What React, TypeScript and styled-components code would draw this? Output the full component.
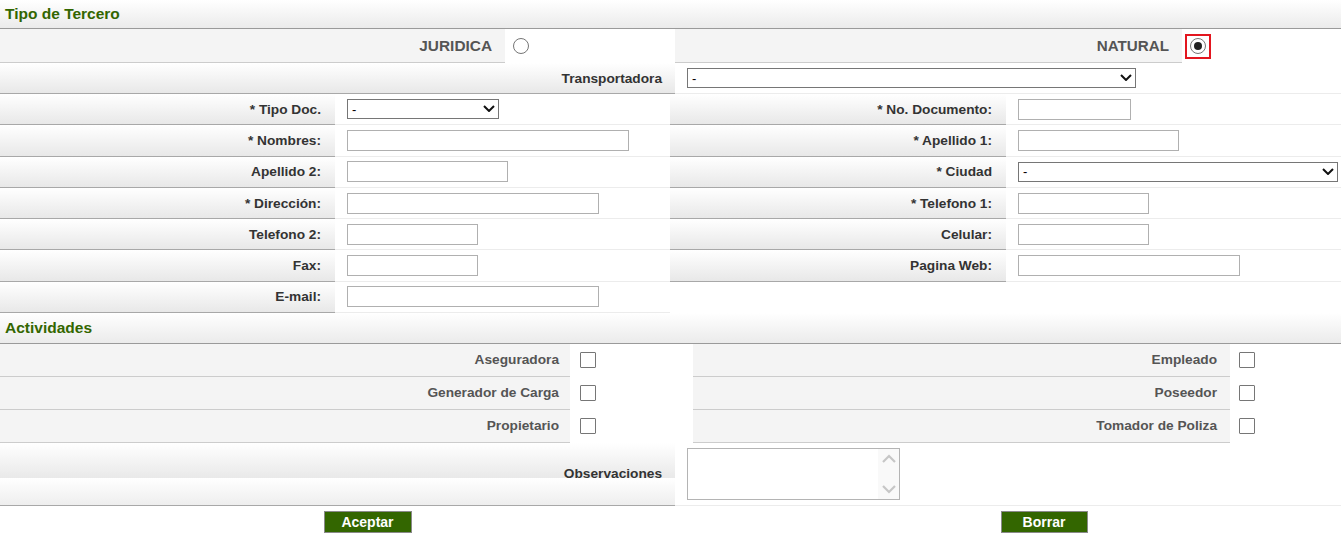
import styled, { createGlobalStyle } from 'styled-components';

const GlobalStyle = createGlobalStyle`
	*, *::before, *::after { box-sizing: border-box; }
	body {
		margin: 0;
		background: #fff;
		font-family: "Liberation Sans", Arial, sans-serif;
	}
`

const GREEN = '#336600';
const SHADE = 'linear-gradient(#ffffff, #e8e8e8)';

type Field = { label: string; kind: 'text' | 'select'; width: number };

const leftFields: Field[] = [
	{ label: '* Tipo Doc.', kind: 'select', width: 152 },
	{ label: '* Nombres:', kind: 'text', width: 282 },
	{ label: 'Apellido 2:', kind: 'text', width: 161 },
	{ label: '* Dirección:', kind: 'text', width: 252 },
	{ label: 'Telefono 2:', kind: 'text', width: 131 },
	{ label: 'Fax:', kind: 'text', width: 131 },
	{ label: 'E-mail:', kind: 'text', width: 252 },
];

const rightFields: Field[] = [
	{ label: '* No. Documento:', kind: 'text', width: 113 },
	{ label: '* Apellido 1:', kind: 'text', width: 161 },
	{ label: '* Ciudad', kind: 'select', width: 320 },
	{ label: '* Telefono 1:', kind: 'text', width: 131 },
	{ label: 'Celular:', kind: 'text', width: 131 },
	{ label: 'Pagina Web:', kind: 'text', width: 222 },
];

const activities = [
	['Aseguradora', 'Empleado'],
	['Generador de Carga', 'Poseedor'],
	['Propietario', 'Tomador de Poliza'],
];

const Dropdown = ({ width }: { width: number }) => (
	<SelectWrap $w={width}>
		<Select><option>-</option></Select>
		<Chevron width="12" height="7" viewBox="0 0 12 7" fill="none" stroke="#111" strokeWidth="2">
			<path d="M1 1 L6 6 L11 1" />
		</Chevron>
	</SelectWrap>
);

const FieldTable = ({ fields, labelWidth }: { fields: Field[]; labelWidth: number }) => (
	<Table>
		{fields.map((f) => (
			<FieldRow key={f.label} $lw={labelWidth}>
				<Label $shade $line="#a8a8a8" $pad={14}>{f.label}</Label>
				<Value>
					{f.kind === 'select'
						? <Dropdown width={f.width} />
						: <TextInput $w={f.width} />}
				</Value>
			</FieldRow>
		))}
	</Table>
);

export default function App() {
	return (
		<Page>
			<GlobalStyle />
			<SectionTitle>Tipo de Tercero</SectionTitle>

			<ChoiceRow>
				<Label $line="#cccccc" $pad={13} $size={15.4} $color="#555">JURIDICA</Label>
				<Plain><Radio type="radio" name="tipo" /></Plain>
				<Label $line="#cccccc" $pad={13} $size={15.2} $color="#555">NATURAL</Label>
				<Plain>
					<FocusRing><Radio type="radio" name="tipo" defaultChecked /></FocusRing>
				</Plain>
			</ChoiceRow>

			<TransportRow>
				<Label $shade $line="#a8a8a8" $pad={13}>Transportadora</Label>
				<Value><Dropdown width={449} /></Value>
			</TransportRow>

			<FormGrid>
				<FieldTable fields={leftFields} labelWidth={335} />
				<FieldTable fields={rightFields} labelWidth={336} />
			</FormGrid>

			<SectionTitle $h={30.5}>Actividades</SectionTitle>

			{activities.map(([a, b]) => (
				<ActivityRow key={a}>
					<Label $line="#cccccc" $pad={11} $color="#555">{a}</Label>
					<Plain $pad={10}><Check type="checkbox" /></Plain>
					<Label $line="#cccccc" $pad={13} $color="#555">{b}</Label>
					<Plain $pad={9}><Check type="checkbox" /></Plain>
				</ActivityRow>
			))}

			<NotesRow>
				<NotesLabel>Observaciones</NotesLabel>
				<Value>
					<NotesBox>
						<Notes />
						<ScrollArrows>
							<svg width="16" height="44" viewBox="0 0 16 44" fill="none" stroke="#c6c6c6" strokeWidth="2.2">
								<path d="M2 10 L8 4 L14 10" />
								<path d="M2 34 L8 40 L14 34" />
							</svg>
						</ScrollArrows>
					</NotesBox>
				</Value>
			</NotesRow>

			<ButtonRow>
				<Button>Aceptar</Button>
				<Button $w={87}>Borrar</Button>
			</ButtonRow>
		</Page>
	)
}

const Page = styled.div`
	width: 1341px;
	color: #333;
`

const SectionTitle = styled.div<{ $h?: number }>`
	height: ${(p) => p.$h ?? 29}px;
	display: flex;
	align-items: center;
	padding-left: 5px;
	background: linear-gradient(#ffffff, #ebebeb);
	border-bottom: 1px solid #9a9a9a;
	color: ${GREEN};
	font-weight: bold;
	font-size: 15.5px;
`

const Row = styled.div`
	display: grid;
`

const ChoiceRow = styled(Row)`
	grid-template-columns: 505px 170px 507px 159px;
	height: 34px;
`

const TransportRow = styled(Row)`
	grid-template-columns: 675px 1fr;
	height: 31px;
`

const FormGrid = styled.div`
	display: grid;
	grid-template-columns: 670px 671px;
	align-items: start;
`

const Table = styled.div`
	display: flex;
	flex-direction: column;
`

const FieldRow = styled(Row)<{ $lw: number }>`
	grid-template-columns: ${(p) => p.$lw}px 1fr;
	height: 31.3px;
`

const ActivityRow = styled(Row)`
	grid-template-columns: 570px 123px 537px 111px;
	height: 33px;
`

const NotesRow = styled(Row)`
	grid-template-columns: 675px 1fr;
	height: 63px;
`

const Label = styled.div<{ $shade?: boolean; $line: string; $pad: number; $size?: number; $color?: string }>`
	display: flex;
	align-items: center;
	justify-content: flex-end;
	padding-right: ${(p) => p.$pad}px;
	background: ${(p) => (p.$shade ? SHADE : '#f4f4f4')};
	border-bottom: 1px solid ${(p) => p.$line};
	font-weight: bold;
	font-size: ${(p) => p.$size ?? 13.7}px;
	color: ${(p) => p.$color ?? '#333'};
	white-space: nowrap;
`

const NotesLabel = styled(Label).attrs({ $shade: true, $line: '#a8a8a8', $pad: 13 })`
	background: linear-gradient(#ffffff, #e9e9e9) 0 0 / 100% 35px repeat-y;
`

const Value = styled.div`
	display: flex;
	align-items: center;
	padding-left: 12px;
	background: #fff;
	border-bottom: 1px solid #ececec;
`

const Plain = styled.div<{ $pad?: number }>`
	display: flex;
	align-items: center;
	padding-left: ${(p) => p.$pad ?? 8}px;
	background: #fff;
`

const TextInput = styled.input<{ $w: number }>`
	width: ${(p) => p.$w}px;
	height: 21px;
	margin: 0;
	border: 1px solid #b0b0b0;
	border-radius: 0;
	padding: 0 3px;
	font: 13px "Liberation Sans", Arial, sans-serif;
	background: #fff;
`

const SelectWrap = styled.div<{ $w: number }>`
	position: relative;
	width: ${(p) => p.$w}px;
	height: 20px;
`

const Select = styled.select`
	appearance: none;
	width: 100%;
	height: 100%;
	margin: 0;
	border: 1px solid #767676;
	border-radius: 0;
	padding: 0 20px 0 4px;
	font: 13px "Liberation Sans", Arial, sans-serif;
	color: #000;
	background: #fff;
`

const Chevron = styled.svg`
	position: absolute;
	right: 4px;
	top: 6px;
	pointer-events: none;
`

const Radio = styled.input`
	appearance: none;
	width: 16px;
	height: 16px;
	margin: 0;
	border: 1px solid #767676;
	border-radius: 50%;
	background: #fff;
	display: grid;
	place-items: center;

	&:checked::after {
		content: '';
		width: 8px;
		height: 8px;
		border-radius: 50%;
		background: #222;
	}
`

const FocusRing = styled.span`
	display: flex;
	align-items: center;
	justify-content: center;
	width: 26px;
	height: 25px;
	margin-left: -5px;
	border: 2px solid #e3161f;
`

const Check = styled.input`
	appearance: none;
	width: 16px;
	height: 16px;
	margin: 0;
	border: 1px solid #767676;
	border-radius: 1px;
	background: #fff;
`

const NotesBox = styled.div`
	position: relative;
	width: 213px;
	height: 52px;
`

const Notes = styled.textarea`
	width: 100%;
	height: 100%;
	margin: 0;
	border: 1px solid #b4b4b4;
	resize: none;
	overflow: hidden;
	font: 13px "Liberation Sans", Arial, sans-serif;
`

const ScrollArrows = styled.div`
	position: absolute;
	top: 1px;
	right: 1px;
	bottom: 1px;
	width: 21px;
	display: flex;
	align-items: center;
	justify-content: center;
	background: #f9f9f9;
	pointer-events: none;
`

const ButtonRow = styled.div`
	display: grid;
	grid-template-columns: 735px 594px;
	column-gap: 12px;
	justify-items: center;
	padding-top: 5px;
	height: 37px;
`

const Button = styled.button<{ $w?: number }>`
	width: ${(p) => p.$w ?? 88}px;
	height: 22px;
	padding: 0;
	background: ${GREEN};
	border: 1px solid #8a8a8a;
	border-radius: 0;
	color: #fff;
	font: bold 14px "Liberation Sans", Arial, sans-serif;
`
